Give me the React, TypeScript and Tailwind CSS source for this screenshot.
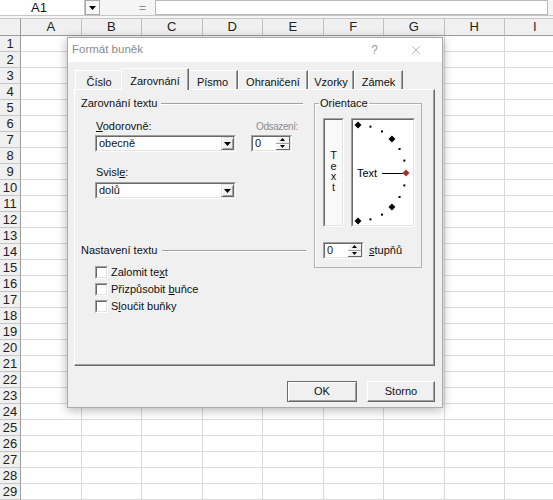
import { Fragment } from 'react'
import { X } from 'lucide-react'

const cols = ['A', 'B', 'C', 'D', 'E', 'F', 'G', 'H', 'I']
const rows = Array.from({ length: 29 }, (_, i) => i + 1)

function Down({ small }: { small?: boolean }) {
  return small ? (
    <svg width="5" height="3" viewBox="0 0 5 3">
      <path d="M0 0h5L2.5 3z" fill="#000" />
    </svg>
  ) : (
    <svg width="7" height="4" viewBox="0 0 7 4">
      <path d="M0 0h7L3.5 4z" fill="#000" />
    </svg>
  )
}

function Up() {
  return (
    <svg width="5" height="3" viewBox="0 0 5 3">
      <path d="M0 3h5L2.5 0z" fill="#000" />
    </svg>
  )
}

function Sunken({ className, children }: { className: string; children?: React.ReactNode }) {
  return (
    <div className={`${className} border border-t-[#a0a0a0] border-l-[#a0a0a0] border-r-white border-b-white`}>
      <div className="flex h-full border border-t-[#696969] border-l-[#696969] border-r-[#e3e3e3] border-b-[#e3e3e3] bg-white">
        {children}
      </div>
    </div>
  )
}

function Combo({ value }: { value: string }) {
  return (
    <Sunken className="h-[17px] w-[141px]">
      <span className="flex-1 pl-[2px] leading-[13px]">{value}</span>
      <span className="flex w-[13px] items-center justify-center border border-t-[#e3e3e3] border-l-[#e3e3e3] border-r-[#696969] border-b-[#696969] bg-[#f0f0f0] shadow-[inset_1px_1px_0_#fff,inset_-1px_-1px_0_#a0a0a0]">
        <Down />
      </span>
    </Sunken>
  )
}

function Spin({ w }: { w: string }) {
  return (
    <Sunken className={`${w} h-[17px]`}>
      <span className="flex-1 pl-[2px] leading-[13px]">0</span>
      <span className="flex w-[14px] flex-col">
        <span className="flex flex-1 items-center justify-center border-r border-b border-r-[#696969] border-b-[#a0a0a0] bg-[#f0f0f0] shadow-[inset_1px_1px_0_#fff]">
          <Up />
        </span>
        <span className="flex flex-1 items-center justify-center border-r border-b border-r-[#696969] border-b-[#696969] bg-[#f0f0f0] shadow-[inset_1px_1px_0_#fff]">
          <Down small />
        </span>
      </span>
    </Sunken>
  )
}

function Check({ children }: { children: React.ReactNode }) {
  return (
    <div className="flex h-[17px] items-center">
      <Sunken className="h-[13px] w-[13px]" />
      <span className="ml-[3px] leading-[13px]">{children}</span>
    </div>
  )
}

function Tab({ label, w, active }: { label: string; w: string; active?: boolean }) {
  if (active) {
    return (
      <div className="relative z-10 -mx-[2px] -mb-px flex h-[22px] w-[68px] items-start justify-center border-t border-l border-r border-t-white border-l-white border-r-[#696969] bg-[#f0f0f0] pt-[4px] shadow-[inset_-1px_0_0_#a0a0a0]">
        {label}
      </div>
    )
  }
  return (
    <div className={`${w} flex h-[19px] items-start justify-center border-t border-l border-r border-t-white border-l-white border-r-[#696969] pt-[3px] shadow-[inset_-1px_0_0_#a0a0a0]`}>
      {label}
    </div>
  )
}

function Dial() {
  const cx = 5
  const cy = 53
  const r = 48
  const diamonds = [90, 45, 0, -45, -90]
  const dots = [75, 60, 30, 15, -15, -30, -60, -75]
  const pt = (a: number) => [cx + r * Math.cos((a * Math.PI) / 180), cy - r * Math.sin((a * Math.PI) / 180)]
  return (
    <svg width="60" height="105" viewBox="0 0 60 105">
      {dots.map((a) => {
        const [x, y] = pt(a)
        return <rect key={a} x={x - 1} y={y - 1} width="2" height="2" fill="#000" />
      })}
      {diamonds.map((a) => {
        const [x, y] = pt(a)
        return (
          <path
            key={a}
            d={`M${x} ${y - 3.5}L${x + 3.5} ${y}L${x} ${y + 3.5}L${x - 3.5} ${y}Z`}
            fill={a === 0 ? '#a3302c' : '#000'}
          />
        )
      })}
      <text x="4" y="57" fontFamily="Liberation Sans, Arial, sans-serif" fontSize="11" fill="#000">
        Text
      </text>
      <line x1="29" y1="53.5" x2="50" y2="53.5" stroke="#000" strokeWidth="1" />
    </svg>
  )
}

export default function App() {
  return (
    <div className="relative h-[500px] w-[553px] overflow-hidden bg-white font-['Liberation_Sans',Arial,sans-serif] text-[#111]">
      {/* formula bar */}
      <div className="flex h-[16px] border-b border-[#c6c6c6] bg-[#f5f5f5]">
        <div className="flex w-[85px] items-center justify-center border-r border-[#c6c6c6] bg-white pr-[6px] text-[13px]">
          A1
        </div>
        <div className="flex w-[15px] items-center justify-center border border-[#a8a8a8] bg-[#f8f8f8]">
          <Down />
        </div>
        <div className="flex w-[55px] items-center justify-end pr-[9px] text-[12px] text-[#8a8a8a]">=</div>
        <div className="w-[393px] border border-[#b8b8b8] bg-white" />
      </div>
      <div className="h-[2px] bg-[#f6f6f6]" />

      {/* sheet grid */}
      <div className="grid grid-cols-[21px_repeat(9,60.5px)] grid-rows-[18px_repeat(29,16px)]">
        <div className="border-t border-r border-b border-t-[#c6c6c6] border-r-[#9b9b9b] border-b-[#9b9b9b] bg-[#f0f0f0]" />
        {cols.map((c) => (
          <div
            key={c}
            className="flex items-center justify-center border-t border-r border-b border-t-[#c6c6c6] border-r-[#c0c0c0] border-b-[#9b9b9b] bg-[#f0f0f0] text-[13px] text-[#222]"
          >
            {c}
          </div>
        ))}
        {rows.map((r) => (
          <Fragment key={r}>
            <div className="flex items-center justify-center border-r border-b border-r-[#9b9b9b] border-b-[#c6c6c6] bg-[#f0f0f0] text-[13px] text-[#222]">
              {r}
            </div>
            {cols.map((c) => (
              <div key={c} className="border-r border-b border-[#dadada] bg-white" />
            ))}
          </Fragment>
        ))}
      </div>

      {/* dialog */}
      <div className="absolute top-[37px] left-[67px] flex h-[371px] w-[376px] flex-col border border-[#aaaaaa] bg-[#f0f0f0] text-[11px] shadow-[0_2px_10px_rgba(0,0,0,0.3)]">
        <div className="flex h-[24px] items-center bg-white pl-[4px] pr-[19px] text-[11.5px] text-[#8a8a8a]">
          <span className="flex-1">Formát buněk</span>
          <span className="mr-[31px] text-[12px] text-[#999]">?</span>
          <X size={14} strokeWidth={1} color="#888" />
        </div>

        <div className="flex flex-1 flex-col pt-[6px] pr-[7px] pb-[5px] pl-[6px]">
          <div className="flex h-[21px] items-end pl-px">
            <Tab label="Číslo" w="w-[48px]" />
            <Tab label="Zarovnání" w="" active />
            <Tab label="Písmo" w="w-[51px]" />
            <Tab label="Ohraničení" w="w-[70px]" />
            <Tab label="Vzorky" w="w-[46px]" />
            <Tab label="Zámek" w="w-[49px]" />
          </div>

          <div className="flex h-[277px] items-start border-t border-l border-r border-b border-t-white border-l-white border-r-[#696969] border-b-[#696969] pt-[7px] shadow-[inset_-1px_-1px_0_#a0a0a0]">
            <div className="flex w-[233px] shrink-0 flex-col pl-[6px]">
              <div className="flex h-[13px] items-center leading-[13px]">
                <span>Zarovnání textu</span>
                <div className="mr-[5px] ml-[4px] flex-1 border-t border-b border-t-[#a0a0a0] border-b-white" />
              </div>
              <div className="mt-[10px] flex pl-[14px]">
                <div className="flex flex-col">
                  <span className="pl-px leading-[13px]">
                    <u>V</u>odorovně:
                  </span>
                  <div className="mt-[2px]">
                    <Combo value="obecně" />
                  </div>
                  <span className="mt-[14px] pl-px leading-[13px]">
                    Svisl<u>e</u>:
                  </span>
                  <div className="mt-[3px]">
                    <Combo value="dolů" />
                  </div>
                </div>
                <div className="ml-[15px] flex flex-col">
                  <span className="pl-[5px] text-[10px] leading-[13px] tracking-[-0.4px] text-[#8d8d8d]">Odsazení:</span>
                  <div className="mt-[2px]">
                    <Spin w="w-[41px]" />
                  </div>
                </div>
              </div>
              <div className="mt-[45px] flex h-[13px] items-center leading-[13px]">
                <span>Nastavení textu</span>
                <div className="mr-[2px] ml-[5px] flex-1 border-t border-b border-t-[#a0a0a0] border-b-white" />
              </div>
              <div className="mt-[7px] flex flex-col pl-[14px]">
                <Check>
                  Zalomit te<u>x</u>t
                </Check>
                <Check>
                  Přizpůsobit <u>b</u>uňce
                </Check>
                <Check>
                  S<u>l</u>oučit buňky
                </Check>
              </div>
            </div>

            {/* Orientace group */}
            <div className="mt-[6px] ml-[6px] flex h-[165px] w-[108px] shrink-0 flex-col border border-[#b0b0b0] pl-[8px] shadow-[inset_1px_1px_0_#fff]">
              <span className="-mt-[7px] ml-[-4px] self-start bg-[#f0f0f0] px-px leading-[13px]">Orientace</span>
              <div className="mt-[8px] flex">
                <div className="h-[109px] w-[21px] border border-t-[#a0a0a0] border-l-[#a0a0a0] border-r-white border-b-white">
                  <div className="flex h-full flex-col items-center justify-center border border-t-[#696969] border-l-[#696969] border-r-[#e3e3e3] border-b-[#e3e3e3] bg-[#f9f9f9] pb-[3px] leading-[10.5px]">
                    <span>T</span>
                    <span>e</span>
                    <span>x</span>
                    <span>t</span>
                  </div>
                </div>
                <div className="ml-[7px] h-[109px] w-[64px] border border-t-[#a0a0a0] border-l-[#a0a0a0] border-r-white border-b-white">
                  <div className="h-full border border-t-[#696969] border-l-[#696969] border-r-[#e3e3e3] border-b-[#e3e3e3] bg-white">
                    <Dial />
                  </div>
                </div>
              </div>
              <div className="mt-[15px] flex items-center">
                <Spin w="w-[41px]" />
                <span className="ml-[5px] leading-[13px]">
                  <u>s</u>tupňů
                </span>
              </div>
            </div>
          </div>

          <div className="mt-[15px] flex justify-end">
            <button className="h-[21px] w-[70px] border border-[#6b6b6b] bg-[#f0f0f0] shadow-[inset_1px_1px_0_#fff,inset_-1px_-1px_0_#a0a0a0]">
              OK
            </button>
            <button className="ml-[10px] h-[21px] w-[68px] border border-t-white border-l-white border-r-[#696969] border-b-[#696969] bg-[#f0f0f0] shadow-[inset_-1px_-1px_0_#a0a0a0]">
              Storno
            </button>
          </div>
        </div>
      </div>
    </div>
  )
}
